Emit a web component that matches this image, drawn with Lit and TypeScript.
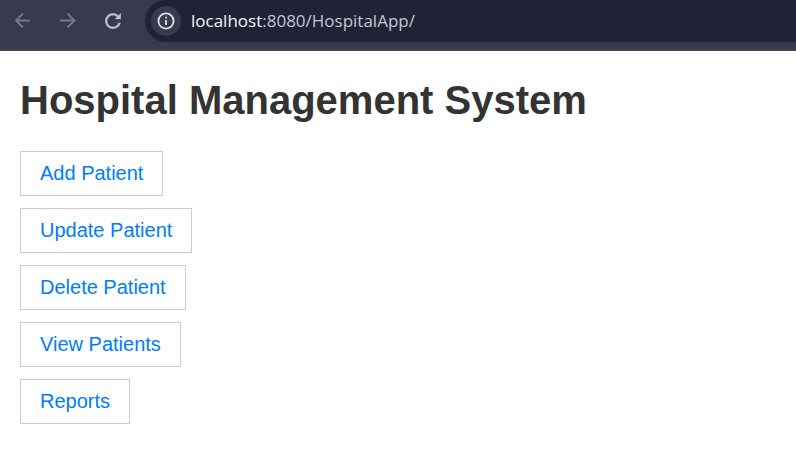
import { LitElement, html, css } from "lit";
import { customElement, state } from "lit/decorators.js";

@customElement("browser-bar")
class BrowserBar extends LitElement {
  static styles = css`
    :host {
      display: block;
    }
    .bar {
      display: flex;
      align-items: flex-start;
      background: #373b4d;
      border-bottom: 2px solid #42454f;
      padding: 0 0 7px 8px;
    }
    .nav {
      display: flex;
      align-items: center;
      gap: 15px;
      height: 42px;
    }
    button {
      display: flex;
      align-items: center;
      justify-content: center;
      border: 0;
      padding: 0;
      background: none;
      border-radius: 50%;
      width: 30px;
      height: 30px;
      color: #bcc3df;
    }
    button:disabled {
      color: #757889;
    }
    .pill {
      display: flex;
      flex: 1;
      align-items: center;
      gap: 10px;
      height: 42px;
      margin-left: 17px;
      padding-left: 6px;
      background: #1f2335;
      border-radius: 21px 0 0 21px;
    }
    .info {
      background: #373b4d;
      color: #dfe1ea;
    }
    .url {
      font: 17px/24px "Segoe UI", "Open Sans", "Noto Sans", sans-serif;
      color: #c3c6d2;
      white-space: nowrap;
    }
    .host {
      color: #f4f5fa;
    }
  `;

  render() {
    return html`
      <header class="bar">
        <nav class="nav" aria-label="Browser">
          <button disabled aria-label="Back">
            <svg width="16" height="16" viewBox="0 0 16 16" fill="none" stroke="currentColor" stroke-width="1.8">
              <path d="M15 7.5H1.8M8 .5 1 7.5l7 7" />
            </svg>
          </button>
          <button disabled aria-label="Forward">
            <svg width="16" height="16" viewBox="0 0 16 16" fill="none" stroke="currentColor" stroke-width="1.8">
              <path d="M0 7.5h13.7M7.5 .5l7 7-7 7" />
            </svg>
          </button>
          <button aria-label="Reload">
            <svg width="16" height="16" viewBox="3.8 3.8 16.4 16.4" fill="currentColor" stroke="currentColor" stroke-width=".3">
              <path d="M17.65 6.35A7.96 7.96 0 0 0 12 4a8 8 0 1 0 7.73 10h-2.08A6 6 0 1 1 12 6c1.66 0 3.14.69 4.22 1.78L14 10h6V4z" />
            </svg>
          </button>
        </nav>
        <div class="pill">
          <button class="info" aria-label="View site information">
            <svg width="18" height="18" viewBox="0 0 18 18" fill="none" stroke="currentColor" stroke-width="1.8">
              <circle cx="9" cy="9" r="7.6" />
              <path d="M9 8v5M9 4.8v1.8" />
            </svg>
          </button>
          <span class="url"><span class="host">localhost</span>:8080/HospitalApp/</span>
        </div>
      </header>
    `;
  }
}

@customElement("app-root")
class AppRoot extends LitElement {
  static styles = css`
    :host {
      display: block;
      min-height: 100vh;
      background: #fff;
      font-family: Arial, "Liberation Sans", sans-serif;
    }
    .page {
      padding: 25px 20px;
    }
    h1 {
      margin: 0 0 27px;
      font-size: 40px;
      line-height: 48px;
      color: #333;
    }
    .links {
      display: flex;
      flex-direction: column;
      align-items: flex-start;
      gap: 12px;
      margin: 0;
      padding: 0;
      list-style: none;
    }
    .link {
      display: block;
      padding: 10px 19px;
      border: 1px solid #ccc;
      font-size: 20px;
      line-height: 23px;
      color: #007bff;
      text-decoration: none;
    }
    .link:hover {
      background: #f0f0f0;
    }
  `;

  @state() private links = [
    ["Add Patient", "#add"],
    ["Update Patient", "#update"],
    ["Delete Patient", "#delete"],
    ["View Patients", "#view"],
    ["Reports", "#reports"],
  ];

  render() {
    return html`
      <browser-bar></browser-bar>
      <main class="page">
        <h1>Hospital Management System</h1>
        <ul class="links">
          ${this.links.map(
            ([label, href]) => html`<li><a class="link" href=${href}>${label}</a></li>`
          )}
        </ul>
      </main>
    `;
  }
}
